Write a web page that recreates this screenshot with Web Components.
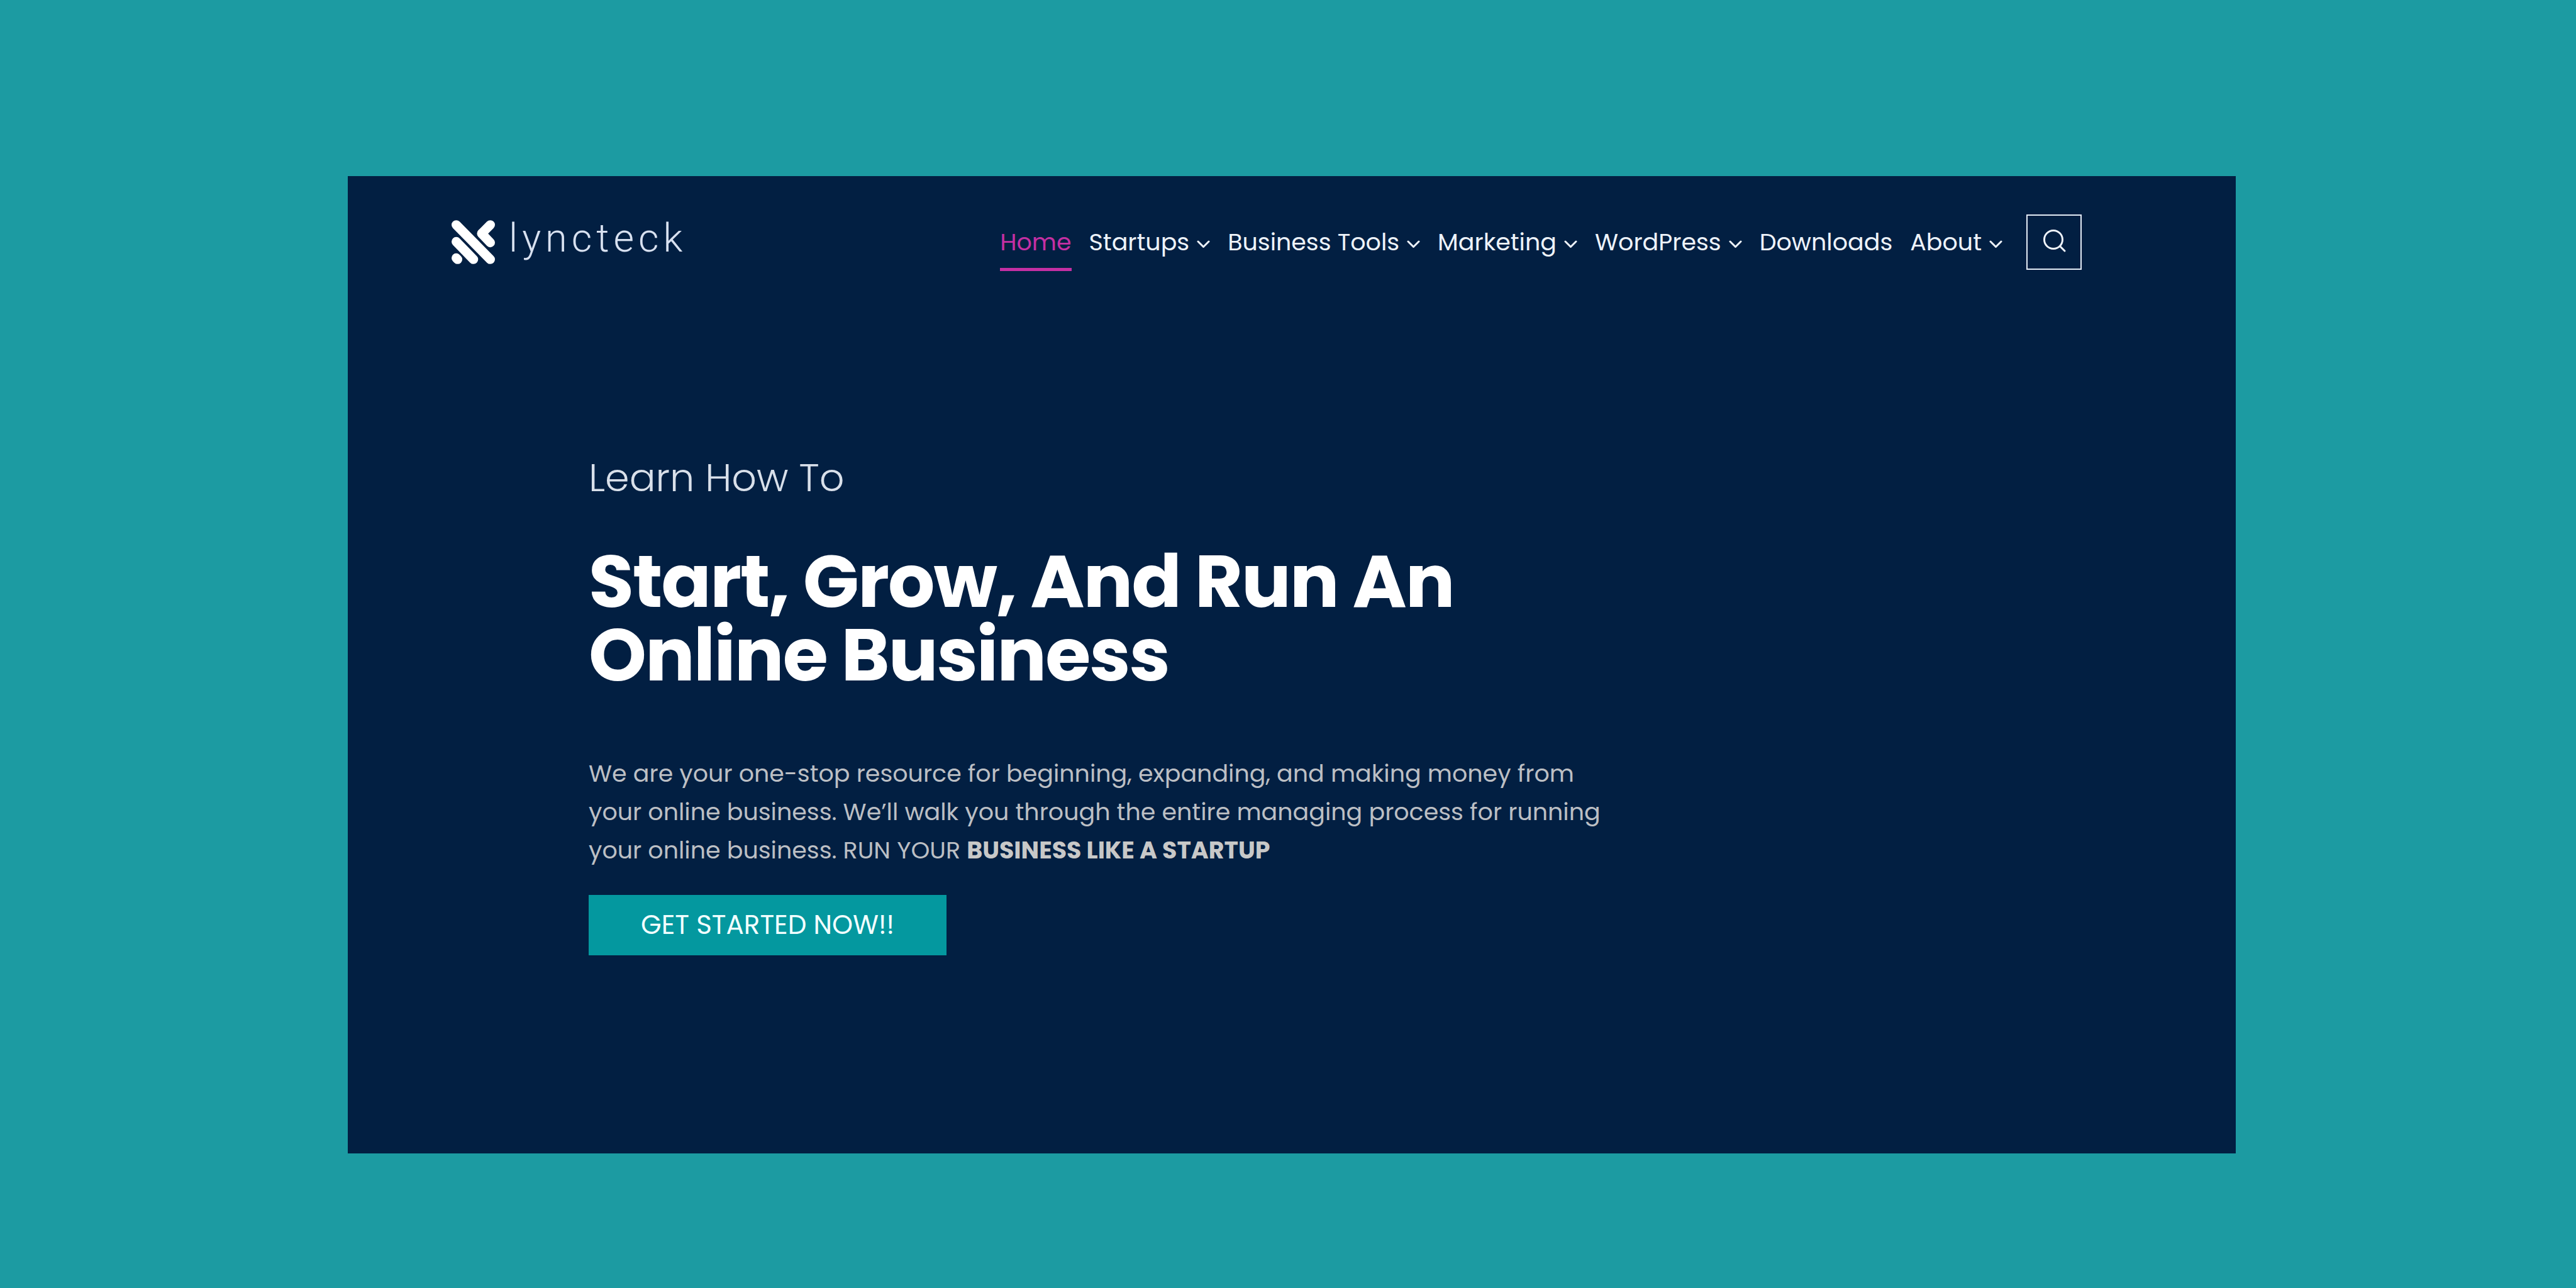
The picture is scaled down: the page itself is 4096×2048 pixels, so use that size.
<!DOCTYPE html>
<html lang="en">
<head>
<meta charset="utf-8">
<title>Lyncteck</title>
<style>
  body {
    margin: 0;
    min-height: 100vh;
    box-sizing: border-box;
    padding: 280px 541px 214px 553px;
    display: flex;
    background: #1c9ba2;
    color: #fff;
    font-family: Poppins, Inter, "Liberation Sans", sans-serif;
  }
</style>
</head>
<body>
<lt-page>
  <lt-header slot="header">
    <lt-logo slot="brand">lyncteck</lt-logo>
    <lt-nav-item current>Home</lt-nav-item>
    <lt-nav-item menu>Startups</lt-nav-item>
    <lt-nav-item menu>Business Tools</lt-nav-item>
    <lt-nav-item menu>Marketing</lt-nav-item>
    <lt-nav-item menu>WordPress</lt-nav-item>
    <lt-nav-item>Downloads</lt-nav-item>
    <lt-nav-item menu>About</lt-nav-item>
    <lt-search slot="tools"></lt-search>
  </lt-header>
  <lt-hero>
    <span slot="eyebrow">Learn How To</span>
    <span slot="title">Start, Grow, And Run An Online Business</span>
    <span slot="action">GET STARTED NOW!!</span>
  </lt-hero>
</lt-page>

<script>
  const define = (name, html, setup) => {
    const template = document.createElement('template');
    template.innerHTML = html;
    customElements.define(name, class extends HTMLElement {
      constructor() {
        super();
        this.attachShadow({ mode: 'open' }).append(template.content.cloneNode(true));
      }
      connectedCallback() {
        if (setup) setup(this, this.shadowRoot);
      }
    });
  };

  define('lt-page', `
    <style>
      :host { display: flex; flex-direction: column; flex: 1; min-width: 0; background: #021f42; }
    </style>
    <slot name="header"></slot>
    <main><slot></slot></main>
  `);

  define('lt-header', `
    <style>
      :host { display: block; }
      header { display: flex; align-items: center; padding: 59px 245px 0 165px; }
      nav { display: flex; gap: 28px; margin-left: auto; margin-right: 38px; }
    </style>
    <header>
      <slot name="brand"></slot>
      <nav aria-label="Main"><slot></slot></nav>
      <slot name="tools"></slot>
    </header>
  `);

  define('lt-logo', `
    <style>
      :host { display: block; }
      a { display: flex; align-items: center; gap: 22px; color: #d8e1f0; text-decoration: none; }
      svg { width: 69px; height: 70px; }
      span { font: 300 63px/72px Roboto, sans-serif; letter-spacing: 7px; padding-bottom: 12px; }
    </style>
    <a href="#">
      <svg viewBox="0 0 93 94" fill="none" stroke="#fff" stroke-width="20" stroke-linecap="round" stroke-linejoin="round" aria-hidden="true">
        <path d="M10 10 83 84M10 46 47 84M10 81 13 84M83 10 64.500 28.500 83 48"/>
      </svg>
      <span><slot></slot></span>
    </a>
  `);

  define('lt-nav-item', `
    <style>
      :host { display: block; font-size: 38px; line-height: 58px; color: #eef3fa; }
      :host([current]) { color: #c42fa3; }
      a {
        display: flex; align-items: center; gap: 12px; padding: 12px 0;
        border: solid transparent; border-width: 5px 0;
        color: inherit; text-decoration: none; white-space: nowrap;
      }
      :host([current]) a { border-bottom-color: currentColor; }
      svg { display: none; width: 21px; height: 24px; }
      :host([menu]) svg { display: block; }
    </style>
    <a href="#">
      <slot></slot>
      <svg viewBox="0 0 21 24" fill="none" stroke="currentColor" stroke-width="3" stroke-linecap="round" stroke-linejoin="round" aria-hidden="true">
        <path d="M2 11 10.500 19.500 19 11"/>
      </svg>
    </a>
  `, (host, root) => {
    if (host.hasAttribute('current')) root.querySelector('a').setAttribute('aria-current', 'page');
  });

  define('lt-search', `
    <style>
      :host { display: block; }
      button {
        display: flex; align-items: center; justify-content: center;
        width: 88px; height: 88px; padding: 0;
        border: 2px solid #e3ebf5; border-radius: 0; background: none; color: #eef3fa;
      }
      svg { width: 40px; height: 40px; overflow: visible; }
    </style>
    <button type="button" aria-label="Search">
      <svg viewBox="0 0 40 40" fill="none" stroke="currentColor" stroke-width="3" stroke-linecap="round" aria-hidden="true">
        <circle cx="19" cy="16" r="14.500"/>
        <path d="M29.500 26.500 37 34"/>
      </svg>
    </button>
  `);

  define('lt-hero', `
    <style>
      :host { display: block; padding: 281px 383px 0; }
      section { max-width: 1640px; }
      p, h1 { margin: 0; }
      .eyebrow { font-size: 62px; line-height: 96px; font-weight: 300; color: #d9e0ea; margin-bottom: 58px; }
      h1 { font-size: 117px; line-height: 117px; font-weight: 700; letter-spacing: -2px; margin-bottom: 99px; }
      .copy { font-size: 38px; line-height: 61px; color: #bcbfc4; margin-bottom: 41px; }
      strong { font-weight: 700; color: #c8c8c8; }
      button {
        display: block; height: 96px; padding: 0 83px;
        border: 0; border-radius: 0; background: #04989f; color: #f2ffff;
        font: 400 42px/60px Poppins, Inter, "Liberation Sans", sans-serif;
      }
    </style>
    <section>
      <p class="eyebrow"><slot name="eyebrow"></slot></p>
      <h1><slot name="title"></slot></h1>
      <p class="copy">We are your one-stop resource for beginning, expanding, and making money from your online business. We’ll walk you through the entire managing process for running your online business. RUN YOUR <strong>BUSINESS LIKE A STARTUP</strong></p>
      <button type="button"><slot name="action"></slot></button>
    </section>
  `);
</script>
</body>
</html>
